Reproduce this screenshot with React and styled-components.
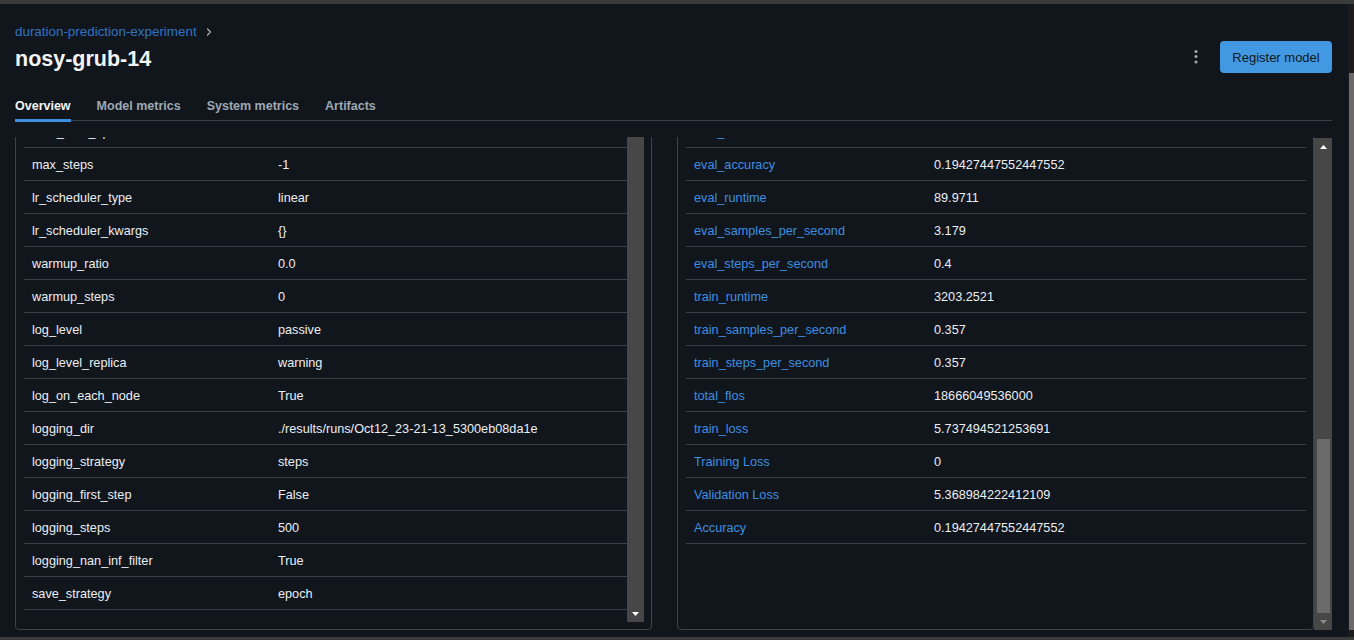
import React from "react";
import styled, { createGlobalStyle } from "styled-components";
import { ChevronRight } from "lucide-react";

const params = [
  ["num_train_epochs", "3"],
  ["max_steps", "-1"],
  ["lr_scheduler_type", "linear"],
  ["lr_scheduler_kwargs", "{}"],
  ["warmup_ratio", "0.0"],
  ["warmup_steps", "0"],
  ["log_level", "passive"],
  ["log_level_replica", "warning"],
  ["log_on_each_node", "True"],
  ["logging_dir", "./results/runs/Oct12_23-21-13_5300eb08da1e"],
  ["logging_strategy", "steps"],
  ["logging_first_step", "False"],
  ["logging_steps", "500"],
  ["logging_nan_inf_filter", "True"],
  ["save_strategy", "epoch"],
];

const metrics = [
  ["eval_loss", "5.368984222412109"],
  ["eval_accuracy", "0.19427447552447552"],
  ["eval_runtime", "89.9711"],
  ["eval_samples_per_second", "3.179"],
  ["eval_steps_per_second", "0.4"],
  ["train_runtime", "3203.2521"],
  ["train_samples_per_second", "0.357"],
  ["train_steps_per_second", "0.357"],
  ["total_flos", "18666049536000"],
  ["train_loss", "5.737494521253691"],
  ["Training Loss", "0"],
  ["Validation Loss", "5.368984222412109"],
  ["Accuracy", "0.19427447552447552"],
];

const GlobalStyle = createGlobalStyle`
  html, body {
    margin: 0;
    padding: 0;
    background: #11161d;
  }
  body {
    font-family: "Liberation Sans", Arial, sans-serif;
    font-size: 13px;
    color: #e8ebee;
  }
`;

const Frame = styled.div`
  width: 1354px;
  height: 640px;
  display: flex;
  flex-direction: column;
  overflow: hidden;
`;

const Strip = styled.div`
  height: ${(p) => p.$h}px;
  flex-shrink: 0;
  background: #3b3b3b;
`;

const Middle = styled.div`
  flex: 1;
  display: flex;
  min-height: 0;
`;

const Main = styled.div`
  flex: 1;
  display: flex;
  flex-direction: column;
  padding: 19px 16px 7px 15px;
  min-height: 0;
`;

const HeaderRow = styled.div`
  display: flex;
  justify-content: space-between;
  align-items: flex-end;
`;

const Crumbs = styled.div`
  display: flex;
  align-items: center;
  gap: 6px;
  height: 18px;
  font-size: 13.4px;
  color: #2f74c0;
  line-height: 18px;

  svg {
    color: #a4adb6;
  }
`;

const Title = styled.h1`
  margin: 4px 0 0;
  font-size: 21.5px;
  line-height: 28px;
  font-weight: 700;
  color: #f2f4f6;
`;

const Actions = styled.div`
  display: flex;
  align-items: center;
  gap: 19px;
`;

const Kebab = styled.button`
  background: none;
  border: 0;
  padding: 0;
  width: 10px;
  height: 18px;
  display: flex;
  align-items: center;
  justify-content: center;
  color: #9ba6b1;
`;

const PrimaryButton = styled.button`
  height: 32px;
  width: 112px;
  border: 0;
  border-radius: 4px;
  background: #4299e1;
  color: #101820;
  font-family: inherit;
  font-size: 13px;
`;

const TabList = styled.div`
  display: flex;
  gap: 26px;
  margin-top: 24px;
  border-bottom: 1px solid #37414b;
`;

const Tab = styled.div`
  line-height: 18px;
  padding-bottom: 4px;
  margin-bottom: -2px;
  font-size: 12.5px;
  font-weight: 700;
  color: ${(p) => (p.$active ? "#f2f4f6" : "#9ea8b2")};
  border-bottom: 3px solid ${(p) => (p.$active ? "#3d8fe0" : "transparent")};
`;

const Viewport = styled.div`
  flex: 1;
  min-height: 0;
  margin-top: 16px;
  display: flex;
  overflow: hidden;
`;

const Columns = styled.div`
  flex: 1;
  margin-top: -31px;
  display: grid;
  grid-template-columns: 637px 637px;
  column-gap: 25px;
`;

const Panel = styled.div`
  border: 1px solid #3a434e;
  border-radius: 4px;
  padding: 8px 7px 7px 8px;
  display: flex;
  min-height: 0;
  overflow: hidden;
`;

const Table = styled.div`
  flex: 1;
  min-width: 0;
  overflow: hidden;
  font-size: 12.7px;
`;

const Row = styled.div`
  height: 32px;
  border-bottom: 1px solid #38414b;
  display: grid;
  grid-template-columns: ${(p) => p.$keyWidth}px 1fr;
  align-items: center;
  padding-top: 1px;
  box-sizing: border-box;
  height: 33px;
`;

const KeyCell = styled.div`
  padding-left: 8px;
  white-space: nowrap;
  color: ${(p) => (p.$link ? "#3d8fe0" : "#eceff2")};
`;

const ValueCell = styled.div`
  white-space: nowrap;
  color: #eceff2;
`;

const Track = styled.div`
  width: ${(p) => p.$w}px;
  flex-shrink: 0;
  margin-top: ${(p) => p.$top || 0}px;
  background: #474747;
  display: flex;
  flex-direction: column;
  align-items: center;
`;

const ArrowBox = styled.div`
  height: 17px;
  width: 100%;
  display: flex;
  align-items: center;
  justify-content: center;
  color: ${(p) => p.$color || "#ffffff"};
`;

const Filler = styled.div`
  flex: 1;
`;

const Thumb = styled.div`
  height: ${(p) => p.$h}px;
  width: 13px;
  margin-left: 1px;
  background: #6b6b6b;
`;

const OuterBar = styled.div`
  width: 6px;
  flex-shrink: 0;
  background: #1c1c1c;
  display: flex;
  flex-direction: column;
  padding-left: 1px;
  box-sizing: border-box;
`;

const OuterThumb = styled.div`
  margin-top: 69px;
  height: 557px;
  background: #6a6a6a;
`;

const Triangle = ({ down }) => (
  <svg width="7" height="4" viewBox="0 0 7 4">
    <path d={down ? "M0 0H7L3.5 4Z" : "M0 4H7L3.5 0Z"} fill="currentColor" />
  </svg>
);

const DataTable = ({ rows, keyWidth, link }) => (
  <Table>
    {rows.map(([k, v]) => (
      <Row key={k} $keyWidth={keyWidth}>
        <KeyCell $link={link}>{k}</KeyCell>
        <ValueCell>{v}</ValueCell>
      </Row>
    ))}
  </Table>
);

export default function App() {
  const tabs = ["Overview", "Model metrics", "System metrics", "Artifacts"];

  return (
    <>
      <GlobalStyle />
      <Frame>
        <Strip $h={4} />
        <Middle>
          <Main>
            <HeaderRow>
              <div>
                <Crumbs>
                  <span>duration-prediction-experiment</span>
                  <ChevronRight size={12} strokeWidth={2.5} />
                </Crumbs>
                <Title>nosy-grub-14</Title>
              </div>
              <Actions>
                <Kebab aria-label="More">
                  <svg width="4" height="16" viewBox="0 0 4 16">
                    <circle cx="2" cy="2.5" r="1.6" fill="currentColor" />
                    <circle cx="2" cy="7.5" r="1.6" fill="currentColor" />
                    <circle cx="2" cy="13" r="1.6" fill="currentColor" />
                  </svg>
                </Kebab>
                <PrimaryButton>Register model</PrimaryButton>
              </Actions>
            </HeaderRow>

            <TabList>
              {tabs.map((t, i) => (
                <Tab key={t} $active={i === 0}>
                  {t}
                </Tab>
              ))}
            </TabList>

            <Viewport>
              <Columns>
                <Panel>
                  <DataTable rows={params} keyWidth={254} />
                  <Track $w={17}>
                    <ArrowBox>
                      <Triangle />
                    </ArrowBox>
                    <Filler />
                    <ArrowBox>
                      <Triangle down />
                    </ArrowBox>
                  </Track>
                </Panel>
                <Panel>
                  <DataTable rows={metrics} keyWidth={248} link />
                </Panel>
              </Columns>
              <Track $w={18} $top={1}>
                <ArrowBox>
                  <Triangle />
                </ArrowBox>
                <Filler />
                <Thumb $h={174} />
                <ArrowBox $color="#8a8a8a">
                  <Triangle down />
                </ArrowBox>
              </Track>
            </Viewport>
          </Main>
          <OuterBar>
            <OuterThumb />
          </OuterBar>
        </Middle>
        <Strip $h={3} />
      </Frame>
    </>
  );
}
